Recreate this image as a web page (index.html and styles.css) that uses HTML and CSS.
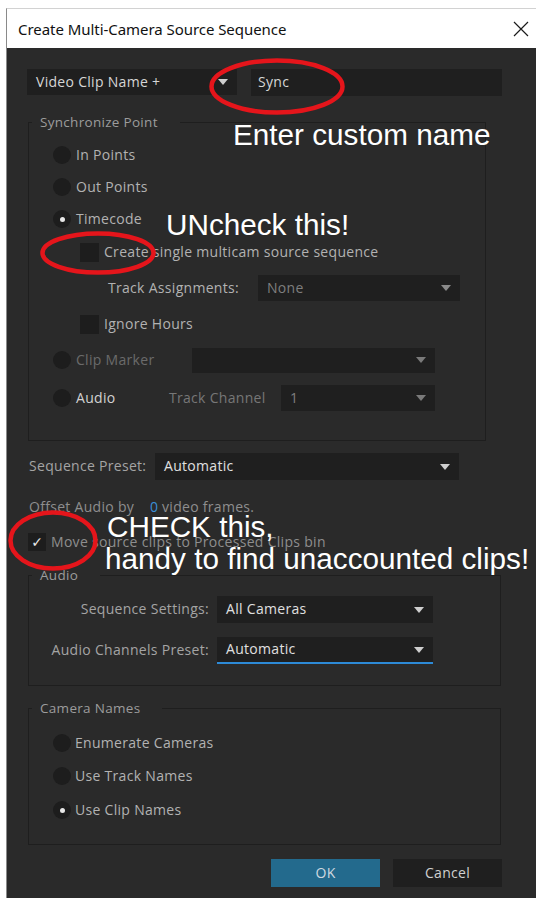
FILE: index.html
```html
<!DOCTYPE html>
<html lang="en">
<head>
<meta charset="utf-8">
<title>Create Multi-Camera Source Sequence</title>
<link rel="stylesheet" href="styles.css">
</head>
<body>
<div class="window">
  <div class="titlebar">
    <span class="title">Create Multi-Camera Source Sequence</span>
    <svg class="close" width="16" height="16" viewBox="0 0 16 16"><path d="M1 1 L15 15 M15 1 L1 15" stroke="#1b1b1b" stroke-width="1.2" fill="none"/></svg>
  </div>

  <div class="content">
    <div class="name-row">
      <div class="select name-select"><span>Video Clip Name +</span><i class="caret"></i></div>
      <div class="textfield"><span>Sync</span></div>
    </div>

    <fieldset class="group sync">
      <legend>Synchronize Point</legend>
      <div class="row r-in"><span class="radio"></span><span class="lbl">In Points</span></div>
      <div class="row r-out"><span class="radio"></span><span class="lbl">Out Points</span></div>
      <div class="row r-tc"><span class="radio on"></span><span class="lbl">Timecode</span></div>
      <div class="row r-single"><span class="check"></span><span class="lbl">Create single multicam source sequence</span></div>
      <div class="row r-track">
        <span class="lbl track-lbl">Track Assignments:</span>
        <div class="select track-select off"><span>None</span><i class="caret"></i></div>
      </div>
      <div class="row r-hours"><span class="check"></span><span class="lbl">Ignore Hours</span></div>
      <div class="row r-marker">
        <span class="radio"></span><span class="lbl dim marker-lbl">Clip Marker</span>
        <div class="select marker-select off"><span></span><i class="caret dim-caret"></i></div>
      </div>
      <div class="row r-audio">
        <span class="radio"></span><span class="lbl bright audio-lbl">Audio</span>
        <span class="lbl dim channel-lbl">Track Channel</span>
        <div class="select channel-select off"><span>1</span><i class="caret dim-caret"></i></div>
      </div>
    </fieldset>

    <div class="preset-row">
      <span class="lbl">Sequence Preset:</span>
      <div class="select preset-select"><span>Automatic</span><i class="caret"></i></div>
    </div>

    <div class="offset-row"><span class="lbl offset-lbl">Offset Audio by</span><span class="lbl num">0</span><span class="lbl">video frames.</span></div>

    <div class="move-row"><span class="check checked">&#10003;</span><span class="lbl">Move source clips to Processed Clips bin</span></div>

    <fieldset class="group audio">
      <legend>Audio</legend>
      <div class="form-row">
        <span class="form-lbl">Sequence Settings:</span>
        <div class="select form-select"><span>All Cameras</span><i class="caret"></i></div>
      </div>
      <div class="form-row">
        <span class="form-lbl">Audio Channels Preset:</span>
        <div class="select form-select focus"><span>Automatic</span><i class="caret"></i></div>
      </div>
    </fieldset>

    <fieldset class="group cams">
      <legend>Camera Names</legend>
      <div class="cam-row"><span class="radio"></span><span class="lbl">Enumerate Cameras</span></div>
      <div class="cam-row"><span class="radio"></span><span class="lbl">Use Track Names</span></div>
      <div class="cam-row"><span class="radio on"></span><span class="lbl">Use Clip Names</span></div>
    </fieldset>

    <div class="buttons">
      <button class="btn ok">OK</button>
      <button class="btn cancel">Cancel</button>
    </div>
  </div>
</div>

<!-- red markup and notes drawn over the dialog -->
<svg class="notes" width="536" height="898" viewBox="0 0 536 898">
  <g fill="none" stroke="#e5151b" stroke-width="4.5">
    <ellipse cx="277" cy="86.5" rx="65.5" ry="26"/>
    <ellipse cx="98" cy="253" rx="55.5" ry="19.5"/>
    <ellipse cx="53" cy="540.5" rx="42.5" ry="28"/>
  </g>
  <g class="note-text" fill="#ffffff">
    <text x="233" y="145">Enter custom name</text>
    <text x="166" y="235">UNcheck this!</text>
    <text x="107" y="537">CHECK this,</text>
    <text x="105" y="569">handy to find unaccounted clips!</text>
  </g>
</svg>
</body>
</html>
```

FILE: styles.css
```css
* { box-sizing: border-box; }

html, body {
  margin: 0;
  padding: 0;
  background: #ffffff;
}

body {
  width: 536px;
  height: 898px;
  overflow: hidden;
  position: relative;
  font-family: "Open Sans", "Noto Sans", sans-serif;
  font-size: 14px;
  letter-spacing: 0.3px;
}

.window {
  margin: 8px 0 0 6px;
  border-left: 1px solid #8a8a8a;
  border-top: 1px solid #d2d2d2;
  height: 890px;
  display: flex;
  flex-direction: column;
}

/* ---- title bar ---- */
.titlebar {
  height: 39px;
  background: #ffffff;
  display: flex;
  align-items: center;
  padding: 0 0 0 11px;
}
.title {
  font-family: "Noto Sans", "Open Sans", sans-serif;
  font-size: 15px;
  letter-spacing: -0.05px;
  color: #111;
  flex: 1;
}
.close {
  margin-right: 7px;
  margin-top: 1px;
}

/* ---- dialog body ---- */
.content {
  flex: 1;
  background: #2a2a2a;
  padding: 21px 0 0 21px;
  display: flex;
  flex-direction: column;
  color: #b2b2b2;
}

/* lift glyphs a touch so they sit centred in their rows */
.lbl, .select span, .textfield span, .form-lbl { padding-bottom: 2px; white-space: nowrap; }
.dim { color: #6b6b6b; }
.bright { color: #d2d2d2; }

.select {
  background: #1f1f1f;
  height: 26px;
  display: flex;
  align-items: center;
  justify-content: space-between;
  padding: 0 9px 0 9px;
  color: #d6d6d6;
}
.select.off { color: #7e7e7e; }

.caret {
  width: 0;
  height: 0;
  border-left: 5px solid transparent;
  border-right: 5px solid transparent;
  border-top: 6px solid #cfcfcf;
}
.off .caret { border-top-color: #8a8a8a; }
.dim-caret { border-top-color: #7a7a7a !important; }

.textfield {
  background: #1f1f1f;
  height: 27px;
  display: flex;
  align-items: center;
  padding-left: 7px;
  color: #d6d6d6;
}

.name-row {
  display: flex;
  gap: 14px;
  margin-left: -1px;
}
.name-select { width: 210px; }
.textfield { width: 251px; }

/* ---- group boxes ---- */
.group {
  margin: 0;
  border: 1px solid #1e1e1e;
  padding: 0;
  min-width: 0;
}
.group legend {
  margin-left: 3px;
  padding: 0 22px 0 8px;
  line-height: 16px;
  font-size: 13.5px;
  color: #9c9c9c;
}
.sync legend, .cams legend { margin-left: -21px; }

.radio {
  width: 18px;
  height: 18px;
  border-radius: 50%;
  background: #1d1d1d;
  display: flex;
  align-items: center;
  justify-content: center;
  flex: none;
}
.radio.on::after {
  content: "";
  width: 5px;
  height: 5px;
  border-radius: 50%;
  background: #e8e8e8;
}

.check {
  width: 19px;
  height: 19px;
  background: #1d1d1d;
  flex: none;
}

/* synchronize point */
.sync {
  width: 458px;
  margin-top: 18px;
  padding: 12px 0 29px 24px;
}
.sync .row {
  height: 26px;
  display: flex;
  align-items: center;
  margin-top: 6px;
}
.sync .row:first-of-type { margin-top: 0; }
.sync .row .radio + .lbl { margin-left: 5px; }
.r-single, .r-hours { padding-left: 27px; }
.r-single { margin-top: 7px !important; }
.r-single .lbl, .r-hours .lbl { margin-left: 5px; }
.r-track { margin-top: 10px !important; padding-left: 55px; }
.r-hours { margin-top: 10px !important; }
.r-marker { margin-top: 10px !important; }
.r-audio { margin-top: 12px !important; }
.track-lbl { width: 150px; color: #b2b2b2; }
.track-select { width: 202px; height: 26px; }
.marker-lbl { width: 116px; }
.marker-select { width: 243px; height: 25px; }
.audio-lbl { width: 93px; }
.channel-lbl { width: 112px; color: #777; }
.channel-select { width: 154px; }

/* sequence preset */
.preset-row {
  margin-top: 12px;
  height: 27px;
  display: flex;
  align-items: center;
  color: #a4a4a4;
}
.preset-row .lbl { width: 126px; margin-left: 1px; }
.preset-select { width: 304px; height: 27px; color: #e0e0e0; }

.offset-row {
  margin-top: 18px;
  height: 18px;
  display: flex;
  align-items: center;
  color: #8e8e8e;
  margin-left: 1px;
}
.offset-lbl { width: 121px; }
.offset-row .num {
  color: #3a8fd8;
  width: 12px;
}

.move-row {
  margin-top: 17px;
  height: 18px;
  display: flex;
  align-items: center;
  color: #8e8e8e;
}
.check.checked {
  width: 18px;
  height: 18px;
  display: flex;
  align-items: center;
  justify-content: center;
  color: #e6e6e6;
  font-family: "DejaVu Sans", sans-serif;
  font-size: 14px;
  font-weight: bold;
  letter-spacing: 0;
}
.move-row .lbl { margin-left: 5px; }

/* audio */
.audio {
  width: 473px;
  margin-top: 16px;
  padding: 13px 0 21px 0;
}
.form-row {
  display: flex;
  align-items: center;
  height: 27px;
}
.form-row + .form-row { margin-top: 14px; }
.form-lbl {
  width: 180px;
  text-align: right;
  color: #a4a4a4;
}
.form-select {
  margin-left: 8px;
  width: 216px;
  height: 27px;
  color: #e0e0e0;
}
.form-select.focus { border-bottom: 2px solid #2d8ad6; }

/* camera names */
.cams {
  width: 473px;
  margin-top: 14px;
  padding: 17px 0 24px 24px;
}
.cam-row {
  height: 20px;
  display: flex;
  align-items: center;
}
.cam-row + .cam-row { margin-top: 13px; }
.cam-row:last-child { margin-top: 14px; }
.cam-row .lbl { margin-left: 4px; color: #b2b2b2; }

/* buttons */
.buttons {
  margin-top: 14px;
  display: flex;
  gap: 13px;
  padding-left: 243px;
}
.btn {
  width: 109px;
  height: 28px;
  border: none;
  font-family: "Open Sans", "Noto Sans", sans-serif;
  font-size: 14px;
  letter-spacing: 0.3px;
  padding: 0 0 2px 0;
}
.btn.ok { background: #236a8d; color: #cfd9e0; }
.btn.cancel { background: #1f1f1f; color: #d0d0d0; }

/* overlay with red markup */
.notes {
  position: absolute;
  left: 0;
  top: 0;
  pointer-events: none;
}
.note-text {
  font-family: "Liberation Sans", Arial, sans-serif;
  font-size: 29.7px;
  letter-spacing: 0;
}
```
